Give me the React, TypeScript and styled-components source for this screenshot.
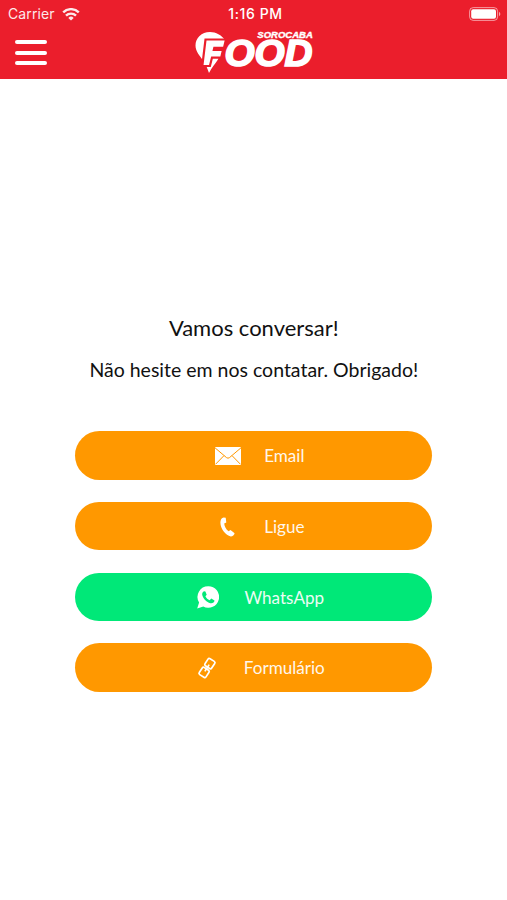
import React from "react";
import styled, { createGlobalStyle } from "styled-components";

const GlobalStyle = createGlobalStyle`
  * { box-sizing: border-box; }
  body { margin: 0; background: #fff; }
`;

const Screen = styled.div`
  width: 507px;
  height: 900px;
  display: flex;
  flex-direction: column;
  background: #fff;
  font-family: Lato, sans-serif;
  overflow: hidden;
`;

const Header = styled.header`
  height: 79px;
  background: #eb1e2c;
  color: #fff;
`;

const StatusBar = styled.div`
  height: 28px;
  padding: 0 6px 0 8px;
  display: grid;
  grid-template-columns: 1fr auto 1fr;
  align-items: center;
  font: 400 14px/28px Inter, sans-serif;
`;

const Carrier = styled.div`
  display: flex;
  align-items: center;
  gap: 7px;
  letter-spacing: 0.1px;
  opacity: 0.9;
`;

const Clock = styled.div`
  padding-left: 2px;
  font-weight: 500;
  letter-spacing: 0.6px;
`;

const Battery = styled.div`
  display: flex;
  justify-content: flex-end;
`;

const NavBar = styled.div`
  height: 51px;
  padding-left: 14px;
  display: grid;
  grid-template-columns: 180px 122px;
`;

const MenuButton = styled.button`
  width: 34px;
  height: 25px;
  margin-top: 12px;
  padding: 0 1px;
  border: 0;
  background: none;
  display: flex;
  flex-direction: column;
  justify-content: space-between;
`;

const MenuLine = styled.span`
  width: 32px;
  height: 4px;
  border-radius: 2px;
  background: #fff;
`;

const Main = styled.main`
  flex: 1;
  padding: 235px 0 0 0.6px;
  display: flex;
  flex-direction: column;
  align-items: center;
  color: #111;
`;

const Title = styled.h1`
  margin: 0;
  font-size: 22px;
  line-height: 28px;
  font-weight: 400;
`;

const Message = styled.p`
  margin: 14px 0 0;
  font-size: 19.5px;
  line-height: 28px;
`;

const Actions = styled.div`
  width: 357px;
  margin-top: 47px;
  display: flex;
  flex-direction: column;
  gap: 22.2px;
`;

const ActionButton = styled.button<{ $color: string }>`
  height: 48.6px;
  padding: 1.4px 0 0 1px;
  border: 0;
  border-radius: 25px;
  display: flex;
  align-items: center;
  justify-content: center;
  gap: 13px;
  background: ${(p) => p.$color};
  color: #fff;
  font: 400 17.1px/24px Lato, sans-serif;
`;

const IconSlot = styled.span`
  width: 47px;
  height: 28px;
  display: flex;
  align-items: center;
  justify-content: center;
`;

const Label = styled.span`
  opacity: 0.92;
`;

const WifiIcon = () => (
  <svg width="18" height="13" viewBox="0 0 18 13" fill="none" stroke="#fff" strokeWidth="2.4">
    <path d="M1.2 4.400a11 11 0 0 1 15.600 0" />
    <path d="M4 7.700a7 7 0 0 1 10 0" />
    <path d="M9 12.600 6.300 9.900a3.800 3.800 0 0 1 5.400 0z" fill="#fff" stroke="none" />
  </svg>
);

const BatteryIcon = () => (
  <svg width="32" height="14" viewBox="0 0 32 14">
    <rect x="0.600" y="0.600" width="28" height="12.800" rx="3.600" fill="none" stroke="#fff" strokeOpacity="0.550" />
    <rect x="2.200" y="2.200" width="24.800" height="9.600" rx="2" fill="#fff" />
    <path d="M30 4.800c1.800.8 1.800 3.600 0 4.400z" fill="#fff" fillOpacity="0.600" />
  </svg>
);

const Logo = () => (
  <svg width="122" height="48" viewBox="0 0 122 48">
    <path d="M16 4C7.500 4 1.500 10 1.500 17.500c0 6 4.500 10.500 8 15.500 2 3 3.500 6.500 5.500 12 3-6 6-9 9-13.500L31 12C27.500 7 22 4 16 4z" fill="#fff" />
    <path d="M11.500 11.500H32l-2 8.300H20.300l-.5 2.200h9.200l-1.800 7.600h-9.200l-2.100 8.400H8.300z" fill="#fff" stroke="#eb1e2c" strokeWidth="2.200" />
    <text x="30.500" y="38.300" textLength="88" lengthAdjust="spacingAndGlyphs" fill="#fff" stroke="#fff" strokeWidth="1.700" fontFamily="Liberation Sans, Arial, sans-serif" fontWeight="700" fontStyle="italic" fontSize="36.500">OOD</text>
    <text x="63.300" y="9.700" textLength="55.500" lengthAdjust="spacingAndGlyphs" fill="#fff" stroke="#fff" strokeWidth="0.400" fontFamily="Liberation Sans, Arial, sans-serif" fontWeight="700" fontStyle="italic" fontSize="9.200">SOROCABA</text>
  </svg>
);

const MailIcon = () => (
  <svg width="26" height="18" viewBox="0 0 26 18">
    <rect width="26" height="18" rx="0.500" fill="#fff" />
    <path d="M0 .8 11.500 10.600Q13 11.800 14.500 10.600L26 .8M.5 17.300 9 8.600M25.500 17.300 17 8.600" fill="none" stroke="#ff9800" strokeWidth="1" />
  </svg>
);

const PhoneIcon = () => (
  <svg width="15" height="20" viewBox="0 0 15 20">
    <path d="M3.700.4 5.700.8 6.300 5.600 4.200 6.500C4.500 9.500 6 12.300 8.600 14.300L10.500 13 14.600 16.200C14.300 18 12.600 19.400 10.800 19.400 5.800 18.800.4 12 .4 5.600.4 2.600 1.600.8 3.700.4z" fill="#fff" />
  </svg>
);

const HANDSET =
  "M7 5.300c-1.600.8-2.200 2.400-1.600 4.300 1 3.400 4.300 6.700 7.900 7.600 2.200.5 4-.6 4.200-2.700L14.300 12.600 12.600 14.300C10.800 13.600 9.300 12.200 8.400 10.300L9.700 8.800 8.400 5.600z";

const WhatsAppIcon = () => (
  <svg width="22" height="23" viewBox="0 0 22 23">
    <path d="M11.300.3a10.700 10.700 0 1 1-5 20.100L.2 22.600l1.900-6A10.700 10.700 0 0 1 11.300.3z" fill="#fff" />
    <path d={HANDSET} fill="#00e878" />
  </svg>
);

const LinkIcon = () => (
  <svg width="22" height="24" viewBox="-11 -12 22 24" fill="none" stroke="#fff" strokeWidth="1.700">
    <g transform="rotate(33)">
      <rect x="-4" y="-9.500" width="8" height="8.500" rx="1.500" />
      <rect x="-4" y="1" width="8" height="8.500" rx="1.500" />
      <path d="M0-4v8" />
    </g>
  </svg>
);

const ACTIONS = [
  { label: "Email", color: "#ff9800", Icon: MailIcon },
  { label: "Ligue", color: "#ff9800", Icon: PhoneIcon },
  { label: "WhatsApp", color: "#00e878", Icon: WhatsAppIcon },
  { label: "Formulário", color: "#ff9800", Icon: LinkIcon },
];

export default function App() {
  return (
    <Screen>
      <GlobalStyle />
      <Header>
        <StatusBar>
          <Carrier>
            Carrier
            <WifiIcon />
          </Carrier>
          <Clock>1:16 PM</Clock>
          <Battery>
            <BatteryIcon />
          </Battery>
        </StatusBar>
        <NavBar>
          <MenuButton aria-label="Menu">
            <MenuLine />
            <MenuLine />
            <MenuLine />
          </MenuButton>
          <Logo />
        </NavBar>
      </Header>
      <Main>
        <Title>Vamos conversar!</Title>
        <Message>Não hesite em nos contatar. Obrigado!</Message>
        <Actions>
          {ACTIONS.map(({ label, color, Icon }) => (
            <ActionButton key={label} $color={color}>
              <IconSlot>
                <Icon />
              </IconSlot>
              <Label>{label}</Label>
            </ActionButton>
          ))}
        </Actions>
      </Main>
    </Screen>
  );
}
